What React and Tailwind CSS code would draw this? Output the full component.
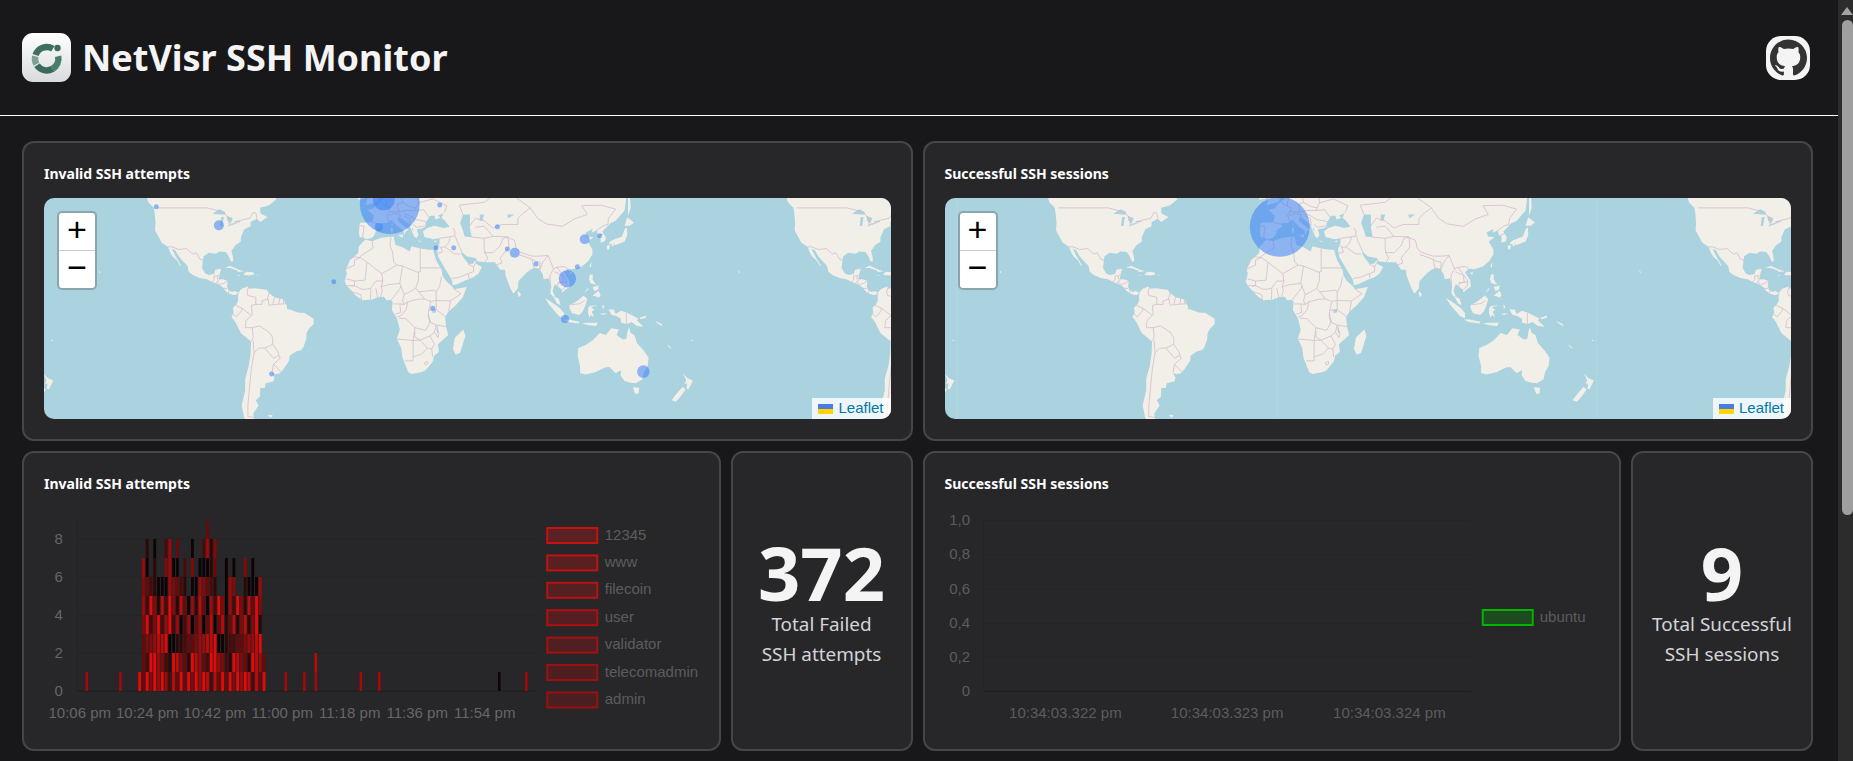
import { SiGithub } from "react-icons/si";

// lon/lat outlines, projected at render time
const LAND = [
  [[-130,60],[-130,55],[-128,51],[-125,49],[-124.5,47],[-124,43],[-124.3,40],[-122.5,37.5],[-120.5,34.5],[-117,32.5],[-115.8,30],[-114.5,28],[-112,26],[-110,23],[-109.5,23],[-111,25.5],[-113,28.5],[-114.7,31.5],[-113,31],[-111,28],[-109,26],[-106,23],[-105.3,20],[-103,18.2],[-99,16.6],[-95,16],[-92,14.5],[-88,13],[-86,11.5],[-85,10],[-83,8.3],[-80,7.3],[-78,7.5],[-77.5,8.5],[-79.5,9.5],[-81,9],[-83,10],[-83.7,12],[-83.3,15],[-86,16],[-88.5,15.8],[-88,18.5],[-87,21.5],[-90.3,21],[-91,18.7],[-94,18.2],[-96,19],[-97.8,22],[-97.3,26],[-97,28],[-94,29.7],[-90,29.2],[-88,30.3],[-84.5,30],[-82.8,28],[-81.5,25.3],[-80.2,25.5],[-80.5,28],[-81.3,30.5],[-79,33.3],[-76,35],[-76,37],[-74,40.5],[-70.5,41.7],[-70.5,43.5],[-67,44.8],[-65,43.5],[-61,45.5],[-65,47],[-65,49],[-60,50],[-56,52],[-60,56],[-65,60]],
  [[-85,22],[-82,23.2],[-77,21],[-74.2,20.2],[-77.5,19.9],[-78,20.7],[-82,22]],
  [[-74.4,18.5],[-73,20],[-69,19.7],[-68.4,18.5],[-71,18],[-74.4,18.2]],
  [[-78.3,18.3],[-76.3,18.2],[-77,17.8]],
  [[-67.2,18.4],[-65.7,18.3],[-66.5,18]],
  [[-156,20.6],[-155,19.8],[-155.6,19]],
  [[-77.5,8.5],[-75.5,10.8],[-72,12],[-71.5,10.8],[-68,11],[-64,10.5],[-61.5,10.2],[-60,8.3],[-57,6],[-52,4.8],[-50,1],[-50,-0.5],[-48,-1],[-44,-2.5],[-40,-2.8],[-37,-4.8],[-35,-6],[-35,-9],[-37.5,-11.5],[-39,-14],[-39.2,-17.5],[-40.8,-21.5],[-42,-23],[-45,-23.8],[-48.5,-26],[-48.8,-28.5],[-52,-32.5],[-54,-34.5],[-56.5,-34.9],[-58.5,-34.2],[-57,-36.5],[-57.7,-38.2],[-62,-39],[-62.5,-41],[-65,-41],[-65.2,-44.5],[-67.5,-46],[-66,-48],[-69,-51],[-68.5,-53],[-65.5,-55],[-70,-55.5],[-74,-52.5],[-75.5,-48],[-73.5,-42],[-73.5,-37],[-71.5,-31],[-70.5,-25],[-70.2,-18.5],[-76,-14],[-79,-8],[-81.2,-5],[-80,-2.5],[-80.5,0],[-78.5,2],[-77.5,4],[-77.5,7]],
  [[-61,-51.5],[-58,-51.4],[-59,-52.3]],
  [[-6,35.8],[-2,35.2],[3,36.8],[10,37.3],[11,33.5],[15,32.4],[19,30.3],[20,32.8],[25,31.7],[30,31.2],[32.3,31.2],[32.5,30],[34,26],[37,21],[37.5,18],[39.5,15],[43,12],[44,10.5],[51.2,11.8],[49,6],[45,1.5],[41,-2],[39,-5],[39.5,-10],[40.7,-15],[35,-20],[35.5,-24],[32.8,-26],[32,-29],[28,-33],[25.5,-34],[20,-34.8],[18.3,-34],[15,-27],[14.3,-22],[11.8,-17],[13.5,-12],[12,-6],[9,-1],[9.5,3.5],[8.5,4.5],[6,4.3],[4.5,6.3],[1,6],[-2,4.8],[-7.5,4.4],[-11,6.7],[-13.5,9.5],[-16.5,12.5],[-17.5,14.7],[-16.3,19],[-17,21],[-14.5,26],[-10,29.5],[-9.5,32.8]],
  [[49.3,-12],[50.4,-15.5],[47.5,-24.5],[45,-25.5],[43.4,-22.5],[44.5,-16.5]],
  [[-9,37],[-9.5,39],[-9,43.2],[-2,43.4],[-1,46],[-4.7,48.3],[-1.5,48.7],[1.5,50.8],[4,52],[8,54],[8.5,57],[10.8,56],[10,54.5],[14,54],[19,54.5],[21,57],[24,59.5],[30,60],[60,72],[110,76],[180,68],[180,65],[170,60],[160,60],[155,59],[142,59],[135,54.5],[141,53],[140,48],[135,44],[132,43],[129.5,41],[127.5,39.5],[129.5,37],[129,35.2],[126.5,34.5],[126.5,37.5],[125,38],[124.5,40],[121.5,39],[122,40.7],[118,39],[119,37.3],[122.5,37],[119.3,35],[121.8,31.5],[122,29],[119.5,25.5],[116,22.8],[111,21.3],[108,21.5],[106,19.5],[108.8,15.5],[109.3,12],[106.8,10.3],[105,8.7],[104.8,10.2],[102.5,12],[100.8,13.3],[100,11.5],[99.5,9.5],[100.5,7],[103,5],[104,1.5],[102,2.5],[100.5,5.5],[98.3,8],[98.5,12],[97.5,16.5],[94.5,16],[94,18.5],[92,21.5],[89,22],[87,21],[85,19.5],[80.3,15],[80,11],[77.5,8],[76,10.5],[73,18],[72.7,21],[70,21],[69,22.5],[67,25],[61.5,25],[57,25.5],[56.5,27],[51,28],[48.5,30],[48,29.5],[50,26.5],[51.5,25],[52,24],[54.5,24.2],[56.3,26],[56.5,24.2],[59.8,22.5],[57.8,19],[55,17],[52,16],[45,13],[43.3,12.8],[42.7,16],[39,21.5],[35,28],[34.9,29.5],[34.3,31.3],[35.7,34],[36,36.5],[32,36],[30.5,36.5],[27.5,37],[26.5,39.5],[29,41],[33,42],[38,41],[41.5,41.5],[39,44],[37,45.2],[38,47],[35,46],[36.5,45.2],[33.5,44.5],[33,46],[30.5,46],[28,43],[28,41.5],[26,40.8],[23,40.5],[24,38],[22.8,36.5],[21.5,37.5],[19.5,41],[19,42.5],[14,45.2],[12.5,45.5],[12.5,44],[16,41.8],[18.5,40.2],[16.8,39.5],[16,38],[15.5,40],[12.5,41.5],[10.5,43],[8.8,44.4],[6,43],[3.2,43.2],[3,41.8],[0,40],[-0.5,38.3],[-2,36.8],[-5.5,36],[-7,37]],
  [[-5.5,50],[1.3,51.2],[1.7,52.7],[0,53.5],[-2,56],[-2,57.7],[-5,58.6],[-6,56],[-3,54],[-5,52]],
  [[-10,52],[-6.2,52.2],[-6,54.5],[-8,55.2],[-10,54]],
  [[12.5,38],[15.5,38.2],[15,36.8]],
  [[8.3,41],[9.7,41],[9.5,39.1],[8.5,39]],
  [[8.6,42.8],[9.5,43],[9.3,41.5]],
  [[23.6,35.5],[26.2,35.2],[24.7,34.9]],
  [[32.4,35],[34.5,35.6],[33.7,34.7]],
  [[130.9,34],[135.5,33.5],[140,35],[141.5,38],[141.3,41.3],[140,40.5],[138.5,37.2],[136.5,36.8],[132.5,35.4]],
  [[130,33],[131.8,33.5],[131.3,31.3],[130.2,31.4]],
  [[132.5,33.5],[134.5,34.2],[134.2,33.3],[133,32.8]],
  [[140,42],[141.5,45.4],[145.3,43.3],[143,42]],
  [[142,46],[143.5,49],[143,54],[142,53]],
  [[120.2,23],[121.5,25.2],[121,22]],
  [[108.7,19.3],[110.5,20],[110,18.4]],
  [[80,9.7],[81.8,7.5],[80.5,6],[79.8,8]],
  [[120.5,18.5],[122.2,18.5],[122,16],[124,13],[120.8,13.8],[120,16]],
  [[122,7],[125.5,9.7],[126.5,7],[125.5,5.8],[124,6.5]],
  [[122,11.8],[125.5,12.5],[125,10.2],[123,9.5]],
  [[117.2,8.4],[119.5,11.3],[119.6,10.4]],
  [[109,1.5],[111.5,2.8],[114,4.5],[117,7],[119,5],[117.8,1],[116.5,-2],[114.5,-4],[110.5,-3],[109,0]],
  [[95.3,5.6],[98,4],[103.5,0],[106,-3],[105.8,-5.8],[103,-4.5],[100.5,-1.5],[97.5,2]],
  [[105.3,-6.5],[108.5,-6.5],[114.5,-7.7],[114.3,-8.7],[108,-7.8]],
  [[116,-8.5],[119,-8.3],[125,-8.3],[124,-10],[119,-9.5]],
  [[119.5,0],[120.5,1.2],[125,1.5],[121,0.4],[123,-1],[121.5,-2],[122.8,-5],[121,-4],[120.3,-5.5],[119.5,-3]],
  [[127.5,2],[128.7,1],[127.8,-0.8]],
  [[126,-3.2],[130.5,-3],[128,-3.9]],
  [[131,-0.8],[134,-0.8],[135,-3.3],[138,-1.6],[141,-2.6],[145,-4.5],[147.8,-6],[147,-7],[150.7,-10.5],[147,-10],[144,-7.8],[141,-9],[138,-8.2],[138,-6],[135,-4.4],[132.8,-4],[132,-2.8]],
  [[148.5,-5.5],[152,-4.2],[152,-5.5],[149,-6.3]],
  [[157,-7],[160.8,-9],[161.5,-10.4],[159,-9]],
  [[164,-20],[167,-22.3],[165,-21.5]],
  [[177.2,-17.5],[178.6,-18],[177.5,-18.2]],
  [[114,-22],[113.5,-26],[115,-31],[115,-34.3],[118,-35],[123.5,-34],[129,-31.7],[131.5,-31.5],[135,-34.5],[138,-33],[137.8,-35.5],[140,-38],[143.5,-38.8],[146.3,-39],[150,-37.3],[151,-34],[153,-31],[153.5,-27],[151,-23.5],[147,-19.3],[145.5,-15],[143.5,-14],[142.5,-10.8],[141.5,-13.5],[141,-17],[139,-17.5],[135.5,-15],[136.8,-12],[132.5,-11.3],[129.5,-15],[126,-14],[122,-18],[118,-20.3]],
  [[144.7,-40.7],[148.3,-40.9],[147.8,-43.3],[146,-43.5]],
  [[172.8,-34.5],[175.5,-36.8],[178.5,-37.7],[176,-41.5],[174.8,-41.3],[175.3,-39],[173.8,-39.3],[174.7,-37.5]],
  [[172.7,-40.5],[174.3,-41.7],[171,-45],[169,-46.6],[166.5,-46],[168.5,-44]],
];

const WATER = [
  [[-92,46.8],[-88,48.5],[-85,47.5],[-84.7,46.5],[-87,46.5]],
  [[-87.7,41.8],[-86.3,42],[-85.5,45.5],[-87,45.5]],
  [[-84,46],[-80.5,45],[-81.7,43],[-83.5,44]],
  [[-83.3,41.6],[-79,42.8],[-79,43],[-83,42.2]],
  [[-79.7,43.3],[-76.2,43.5],[-76.3,44.1],[-79.3,43.9]],
  [[49,46.5],[53,46.5],[53,41],[54,37],[50,37.3],[49,40],[47.5,43]],
  [[31.7,-1],[34,-0.5],[33.8,-2.5],[32,-2.8]],
  [[29.3,-3.5],[29.8,-3.5],[31,-8],[30.4,-8]],
  [[34.2,-10],[34.8,-10],[35,-14],[34.4,-14]],
  [[58.5,46.5],[61,46.5],[60,44],[58.5,44]],
  [[74,46.5],[78,46.5],[74.5,45]],
];

const BORDERS = [
  [[-123,49],[-95,49],[-89,48],[-84.5,46.5],[-82.5,45],[-82.5,42.5],[-79,43],[-76,44.2],[-71,45],[-69,47.3],[-67.5,47],[-67,45]],
  [[-117,32.5],[-114.7,32.5],[-111,31.3],[-108,31.5],[-106.5,31.7],[-103,29],[-101,29.7],[-99,26.5],[-97.2,25.9]],
  [[-92.2,14.5],[-91,16],[-91,17.8],[-89,17.8],[-88.3,18.4]],
  [[-89,17.8],[-89.2,15.9]],
  [[-90,13.8],[-89.3,14.4],[-88.5,15.8]],
  [[-89.3,14.4],[-87.8,13.4]],
  [[-87.5,13],[-85,14],[-83.2,15]],
  [[-85.7,11],[-83.7,10.9]],
  [[-83,8.3],[-82.6,9.6]],
  [[-77.3,8.6],[-77.9,7.2]],
  [[-71.5,12],[-72.5,9],[-72,7],[-67.5,6],[-67.5,2],[-70,1.5],[-69.5,-4.2]],
  [[-60,8.5],[-61,5],[-60.7,5]],
  [[-67.5,2],[-64,2],[-64,4],[-60.7,5]],
  [[-57,6],[-58,2]],
  [[-54,5.7],[-54.5,2.3]],
  [[-52,4.5],[-52,2.5]],
  [[-60.7,5],[-60,1.5],[-56,2],[-52,2.3],[-50.5,2.5]],
  [[-78.8,1.4],[-75.5,0],[-70,-4.2]],
  [[-80.3,-3.4],[-78.5,-5],[-75.5,-1.5],[-75.5,0]],
  [[-70,-4.2],[-73,-7],[-73.5,-11],[-69.5,-11]],
  [[-69.5,-11],[-69,-16],[-69.5,-17.5],[-70.3,-18.3]],
  [[-69.5,-11],[-65.5,-10],[-60,-13.5],[-58,-16.5],[-58,-20]],
  [[-58,-20],[-62.5,-22],[-66,-22],[-67,-23],[-68.5,-24.5]],
  [[-69,-18],[-68.5,-24.5],[-70,-32],[-71,-40],[-72,-48],[-72,-52],[-68.5,-52.3]],
  [[-58,-20],[-55,-24],[-54.6,-25.6],[-57.5,-27.3],[-62.5,-22]],
  [[-54.6,-25.6],[-53.8,-27.2],[-57.6,-30.2],[-58.4,-34]],
  [[-57.6,-30.2],[-53.4,-33.7]],
  [[-2,35],[-1.5,32],[-8.7,28],[-8.7,27.3],[-13,27.7]],
  [[-8.7,27.3],[-12,26],[-12,23.5],[-17,21.3]],
  [[-8.7,27.3],[-5,25],[3.3,19],[4,15]],
  [[3.3,19],[12,23.5]],
  [[-5,25],[-6,15.5],[-12,15],[-16.5,16.2]],
  [[8.5,37],[8,33],[9.5,30],[10,25],[12,23.5]],
  [[25,31.7],[25,20],[24,20],[24,15.5],[22.5,11]],
  [[25,22],[37,22]],
  [[12,23.5],[15,23],[24,19.5]],
  [[15,23],[13.5,14],[14,12.5],[15,10],[16,7.5]],
  [[4,15],[3,11.8],[3.7,10],[2.7,6.3]],
  [[3,11.8],[7,13],[13.5,13.7]],
  [[-12,12.5],[-8,10.5],[-5.5,10.5],[-3,11],[0,15],[4,15]],
  [[-13.7,12],[-12,12.5]],
  [[-13.3,9],[-10.5,8.3],[-8.5,7.5],[-8,4.5]],
  [[-3,5],[-2.8,11]],
  [[1,6],[0,11]],
  [[-16.8,12.5],[-12,12.5],[-12,15]],
  [[8.7,4.5],[13.7,11],[14,12.5]],
  [[16,7.5],[15,4],[16,2],[13.5,2.3],[9.8,2.3]],
  [[16,2],[18,3.5],[24,5],[27.5,5],[31,3.7],[34,4.2]],
  [[16,7.5],[19,9],[22.5,11],[27.5,5]],
  [[24,9],[33,10],[34,9]],
  [[37,17.5],[36,12.5],[34,9],[34,4.2],[42,4],[48,8],[44,10.5]],
  [[42,4],[41,-1.7]],
  [[34,4.2],[34,-1],[39.2,-4.7]],
  [[31,3.7],[29.8,-1.3],[34,-1]],
  [[29.8,-1.3],[29.5,-4.5],[30.5,-8],[34,-9.5],[40.4,-10.5]],
  [[13,-5.8],[17,-6],[22,-11],[28,-12.5],[30.5,-8]],
  [[18,3.5],[17,-1],[14,-4.5],[12,-5]],
  [[13.5,2.3],[14,-2.5],[11,-3.5]],
  [[12,-17.2],[21,-18],[22,-11]],
  [[21,-18],[21,-28.5],[16.5,-28.5]],
  [[21,-18],[25,-17.8],[29,-22],[26,-25],[21,-26.5]],
  [[22,-13],[22,-16],[25,-17.8],[30.5,-15.5],[33,-13.5],[34,-9.5]],
  [[30.5,-15.5],[33,-20],[31.5,-22.5]],
  [[29,-22],[31.5,-22.5],[32,-26.5]],
  [[33,-13.5],[35,-16.5],[35.5,-14],[34.5,-11.5]],
  [[27.2,-29.5],[29,-28.8],[29.2,-30],[28,-30.6],[27.2,-29.5]],
  [[-1.7,43.3],[3.2,42.4]],
  [[-8.8,42],[-6.5,41.8],[-7,39.5],[-7.4,37.2]],
  [[2.5,51],[6,49.5],[8,49],[7.5,47.6],[6,46.2],[7,44],[7.5,43.8]],
  [[7,53.3],[6,50.8],[6,49.5]],
  [[7.5,47.6],[10,47.5],[13,47.5],[12.2,50.3],[15,51],[14.2,53.9]],
  [[15,51],[19,49.5],[22.7,49],[24,50.8],[23.5,54],[19.8,54.4]],
  [[24,50.8],[32,52.2],[40,49.7],[38.5,47.2]],
  [[22.7,49],[22,48],[27,48.3],[29.8,45.5]],
  [[7,46],[10,46.8],[13.7,46.5],[13.7,45.6]],
  [[13,47.5],[17,48],[22,48]],
  [[16,46.8],[19,46],[22.5,44.5],[28.5,43.7]],
  [[16,46],[19,44.8],[19.3,42]],
  [[21,42.4],[23,41.3],[26.3,41.7],[28,42]],
  [[20.5,41],[21,39.8]],
  [[36,36.5],[42,37.2],[44.5,37.5],[44.5,39.7],[43.5,41]],
  [[42,37.2],[41,34.5],[39,32.5],[36.5,32.3],[35.6,33.2]],
  [[39,32.5],[44,29.2],[47.5,29]],
  [[44.8,37.3],[46,34.5],[48.5,30]],
  [[36.5,32.3],[37.5,30],[35,29.4]],
  [[43,16.5],[47,17],[52,19],[55,20],[55,22.5],[52,24]],
  [[52.5,16.5],[52,19]],
  [[55,22.5],[56.3,24.8]],
  [[61,36.5],[61,31.5],[61.5,29.5],[63,27],[61.5,25]],
  [[61,29.8],[66,29.7],[70,33],[71.5,36.5],[74.5,37]],
  [[53.8,37],[61,36.5]],
  [[61,36.5],[66,37.3],[74,37.2]],
  [[53,42],[56,45],[61,44],[66,41],[71,42.5],[80,42.5]],
  [[56,41.3],[61,41.8],[66,37.3]],
  [[49,46.5],[47,50],[61,51],[70,55],[77,53.5],[87,49]],
  [[87,49],[91,45],[96,42.7],[105,41.7],[112,44.8],[119,46.5],[116,49.8]],
  [[80,42.5],[80,45],[83,47],[87,49]],
  [[74,37],[78,35.5],[79,32],[81,30],[88,28],[92,28],[97,28.3],[98.5,25],[100,21.5],[102,22.3],[106,22.8],[108,21.5]],
  [[74.5,37],[75,32.5],[70,27],[71,24.5],[68.2,23.7]],
  [[80.5,28.8],[88,26.4]],
  [[88,26.4],[89,22],[92.3,21],[92.5,25],[89.8,25.5],[88,26.4]],
  [[92.3,21],[94,25],[97,28.3]],
  [[100,21.5],[98,18],[98.5,11]],
  [[100.5,20],[105,18],[105.5,14.3],[102.5,14],[102.5,12]],
  [[102,22.3],[105,18.5],[107.5,15],[107,12],[105,10.5]],
  [[102.5,14],[107.5,14.5]],
  [[100.2,6.4],[102,6]],
  [[124.5,40],[128,42],[130.6,42.4]],
  [[126,38],[128.4,38.5]],
  [[116,49.8],[127,50],[135,48.5],[131,45],[130.6,42.4]],
  [[109.7,1.8],[115,2.5],[117.5,4.2]],
  [[141,-2.6],[141,-9]],
];

const projX = (lon) => 12 + ((lon + 180) / 360) * 640;
const projY = (lat) => 110 - (640 / (2 * Math.PI)) * Math.log(Math.tan(Math.PI / 4 + (lat * Math.PI) / 360));
const toPath = (pts, close) =>
  pts.map(([lon, lat], i) => `${i ? "L" : "M"}${projX(lon).toFixed(1)} ${projY(lat).toFixed(1)}`).join("") + (close ? "Z" : "");

const landPath = LAND.map((p) => toPath(p, true)).join("");
const waterPath = WATER.map((p) => toPath(p, true)).join("");
const borderPath = BORDERS.map((p) => toPath(p, false)).join("");

const INVALID_DOTS = [
  [346, 6, 30], [340, 1.3, 11], [335, 29, 4], [112.3, 8.7, 2.5], [175, 27.3, 5], [396, 7, 2.5],
  [392.3, 49.7, 2.5], [410, 49.7, 2.5], [290, 83.7, 2.5], [389, 110.3, 2.5], [227.7, 176, 2.5],
  [453.7, 28.7, 2.5], [541, 41.3, 5], [556, 37.7, 2.5], [463.7, 51, 2.5], [471, 54.7, 5],
  [492.3, 66, 2.5], [533.7, 68.7, 2.5], [523.7, 80.7, 8.7], [521.3, 121, 4], [599.7, 173.7, 6.3],
];
const SUCCESS_DOTS = [[335, 28.7, 30]];

function WorldMap({ dots, seams }) {
  return (
    <div className="relative h-[221px] overflow-hidden rounded-[10px] bg-[#aad3df]">
      <svg viewBox="0 0 847 221" className="block h-[221px] w-full blur-[0.35px]">
        {[-640, 0, 640].map((dx) => (
          <g key={dx} transform={`translate(${dx} 0)`}>
            <path d={landPath} fill="#f2efe9" />
            <path d={waterPath} fill="#aad3df" />
            <path d={borderPath} fill="none" stroke="#d3bccb" strokeWidth="0.8" />
          </g>
        ))}
        {seams && [12, 332, 652].map((x) => (
          <line key={x} x1={x} x2={x} y1="0" y2="221" stroke="#ffffff" strokeOpacity="0.12" />
        ))}
        {dots.map(([x, y, r]) => (
          <circle key={`${x}-${y}`} cx={x} cy={y} r={r} fill="#3b82f6" fillOpacity="0.55" />
        ))}
      </svg>
      <div className="absolute left-[13px] top-[13px] w-[40px] overflow-hidden rounded-[5px] border-2 border-[#8ba5ad] bg-white font-['Liberation_Mono',monospace] text-black">
        <div className="flex h-[38px] items-center justify-center border-b border-[#ccc] text-[34px] leading-none">+</div>
        <div className="flex h-[37px] items-center justify-center text-[34px] leading-none">−</div>
      </div>
      <div className="absolute bottom-0 right-0 flex h-[21px] items-center gap-[5px] bg-white/80 pl-[6px] pr-[7px] font-['Liberation_Sans',sans-serif] text-[15px] text-[#0078a8]">
        <svg width="15" height="10" viewBox="0 0 15 10">
          <rect width="15" height="5" fill="#4c7be1" />
          <rect y="5" width="15" height="5" fill="#ffd500" />
        </svg>
        Leaflet
      </div>
    </div>
  );
}

// top of each stacked column in the dense part of the chart
const TOPS = [1,7,8,6,8,6,6,8,8,7,8,6,7,5,8,6,7,8,9,8,8,5,5,7,6,7,5,5,7,6,7,6,6,2];
const SPARSE = [[86.5,1],[120,1],[285.5,1],[304,1],[315.5,1],[360.5,1],[379,1],[499,1],[526,1]];
const REDS = ["#0d0505","#2e0707","#4d0808","#6b0808","#860808","#a30808","#c40808","#ee0606"];

const shade = (i, j) => {
  const v = (((i + 3) * 2654435 + (j + 7) * 40503 + i * j * 977) >>> 3) % 8;
  // lower rows run brighter, the tall tops of the columns stay dark
  const bump = j === 0 ? 2 : j === 1 ? 1 : j >= 5 ? -2 : 0;
  return REDS[Math.max(0, Math.min(7, v + bump))];
};

const LABELS_1 = [
  ["12345", "#c81212"], ["www", "#c41212"], ["filecoin", "#b81212"], ["user", "#b01010"],
  ["validator", "#a51010"], ["telecomadmin", "#9e1010"], ["admin", "#981010"],
];

function FailedChart() {
  const axis = { fontFamily: "'Liberation Sans', sans-serif", fontSize: 15, fill: "#666" };
  return (
    <svg viewBox="44 508 654 221" className="block h-[221px] w-full">
      {[520, 539, 577, 615, 653, 691].map((y) => (
        <line key={y} x1="77" x2="535" y1={y} y2={y} stroke="#000" strokeOpacity={y === 691 ? 0.25 : 0.07} />
      ))}
      <line x1="77" x2="77" y1="520" y2="691" stroke="#000" strokeOpacity="0.1" />
      {[[8, 539], [6, 577], [4, 615], [2, 653], [0, 691]].map(([v, y]) => (
        <text key={v} x="62.5" y={y + 4.5} textAnchor="end" {...axis}>{v}</text>
      ))}
      {["10:06 pm", "10:24 pm", "10:42 pm", "11:00 pm", "11:18 pm", "11:36 pm", "11:54 pm"].map((t, i) => (
        <text key={t} x={79.5 + i * 67.5} y="718" textAnchor="middle" {...axis}>{t}</text>
      ))}
      {TOPS.map((top, i) =>
        Array.from({ length: top }, (_, j) => (
          <rect key={`${i}-${j}`} x={138 + i * 3.77} y={691 - (j + 1) * 19} width="2.8" height="19" fill={shade(i, j)} />
        ))
      )}
      {SPARSE.map(([x, n]) => (
        <rect key={x} x={x - 1.2} y={691 - n * 19} width="2.5" height={n * 19} fill={x === 499 ? "#0d0505" : "#a80808"} />
      ))}
      <rect x="314.3" y="653" width="2.5" height="19" fill="#c00808" />
      {LABELS_1.map(([name, color], i) => (
        <g key={name}>
          <rect x="547" y={528 + i * 27.4} width="50" height="15" fill={color} fillOpacity="0.32" stroke={color} strokeWidth="2" />
          <text x="604.5" y={539.5 + i * 27.4} {...axis} fill="#5c5c5c">{name}</text>
        </g>
      ))}
    </svg>
  );
}

function SuccessChart() {
  const axis = { fontFamily: "'Liberation Sans', sans-serif", fontSize: 15, fill: "#5c5c5c" };
  const rows = [["1,0", 520.7], ["0,8", 554.7], ["0,6", 589.3], ["0,4", 623.3], ["0,2", 657], ["0", 691.3]];
  return (
    <svg viewBox="944.5 508 654 221" className="block h-[221px] w-full">
      {rows.map(([label, y]) => (
        <g key={label}>
          <line x1="983" x2="1470" y1={y} y2={y} stroke="#000" strokeOpacity={label === "0" ? 0.25 : 0.07} />
          <text x="969.3" y={y + 4.5} textAnchor="end" {...axis}>{label}</text>
        </g>
      ))}
      <line x1="983" x2="983" y1="520" y2="691" stroke="#000" strokeOpacity="0.1" />
      {[["10:34:03.322 pm", 1064.6], ["10:34:03.323 pm", 1226.4], ["10:34:03.324 pm", 1388.6]].map(([t, x]) => (
        <text key={t} x={x} y="718" textAnchor="middle" {...axis}>{t}</text>
      ))}
      <rect x="1482" y="610" width="50" height="15" fill="#00b800" fillOpacity="0.25" stroke="#00b400" strokeWidth="2" />
      <text x="1539" y="621.5" {...axis}>ubuntu</text>
    </svg>
  );
}

function Card({ title, children }) {
  return (
    <div className="h-[300px] min-w-0 rounded-[12px] border-2 border-[#45454a] bg-[#27272a] px-5 pt-[21px]">
      <h2 className="mb-[14px] h-5 text-sm font-bold leading-5 text-white">{title}</h2>
      {children}
    </div>
  );
}

function Stat({ value, line1, line2 }) {
  return (
    <div className="flex h-[300px] flex-col items-center justify-center rounded-[12px] border-2 border-[#45454a] bg-[#27272a] pt-[4px] text-center">
      <div className="text-[74px] font-bold leading-[72px] text-[#f4f4f5]">{value}</div>
      <div className="text-[18.9px] leading-[30px] text-[#d4d4d8]">
        {line1}
        <br />
        {line2}
      </div>
    </div>
  );
}

// ring arcs for the logo, angles clockwise from east
const arc = (from, to) => {
  const pt = (deg) => {
    const a = (deg * Math.PI) / 180;
    return `${(24.7 + 11.7 * Math.cos(a)).toFixed(2)} ${(25.7 + 11.7 * Math.sin(a)).toFixed(2)}`;
  };
  return `M${pt(from)}A11.7 11.7 0 ${to - from > 180 ? 1 : 0} 1 ${pt(to)}`;
};

function Logo() {
  return (
    <div className="h-[49px] w-[49px] rounded-[11px] bg-gradient-to-b from-white to-[#d8dbde]">
      <svg viewBox="0 0 49 49" className="h-[49px] w-[49px]">
        <g fill="none" strokeWidth="6.5">
          <path d={arc(198, 302)} stroke="#3f6f5e" />
          <path d={arc(-12, 60)} stroke="#4b7d6b" />
          <path d={arc(60, 146)} stroke="#3a6a59" />
          <path d={arc(152, 192)} stroke="#7da294" />
        </g>
        <circle cx="35.5" cy="15" r="3.2" fill="#3f6a5c" />
      </svg>
    </div>
  );
}

export default function App() {
  return (
    <div className="flex h-screen overflow-hidden bg-[#18181b] font-['Noto_Sans',sans-serif]">
      <main className="min-w-0 flex-1">
        <header className="flex h-[116px] items-center justify-between border-b border-white pl-[22px] pr-[28px]">
          <div className="flex items-center gap-[11px]">
            <Logo />
            <h1 className="text-4xl font-bold text-[#f4f4f5]">NetVisr SSH Monitor</h1>
          </div>
          <div className="flex h-[44px] w-[44px] items-center justify-center rounded-[15px] bg-[#f4f4f4]">
            <SiGithub className="h-[37px] w-[37px] text-[#333]" />
          </div>
        </header>

        <div className="flex flex-col gap-[10px] pl-[22px] pr-[25px] pt-[25px]">
          <div className="grid grid-cols-2 gap-[10px]">
            <Card title="Invalid SSH attempts"><WorldMap dots={INVALID_DOTS} /></Card>
            <Card title="Successful SSH sessions"><WorldMap dots={SUCCESS_DOTS} seams /></Card>
          </div>
          <div className="grid grid-cols-2 gap-[10px]">
            <div className="grid grid-cols-[1fr_182px] gap-[10px]">
              <Card title="Invalid SSH attempts"><FailedChart /></Card>
              <Stat value="372" line1="Total Failed" line2="SSH attempts" />
            </div>
            <div className="grid grid-cols-[1fr_182px] gap-[10px]">
              <Card title="Successful SSH sessions"><SuccessChart /></Card>
              <Stat value="9" line1="Total Successful" line2="SSH sessions" />
            </div>
          </div>
        </div>
      </main>

      <aside className="flex w-[15px] shrink-0 flex-col bg-[#2c2c2c] pl-[4px]">
        <div className="mb-[5px] ml-[-1px] mt-[7px] h-0 w-0 border-x-[6px] border-b-[8px] border-x-transparent border-b-[#a3a3a3]" />
        <div className="h-[495px] w-[11px] rounded-full bg-[#9f9f9f]" />
      </aside>
    </div>
  );
}
